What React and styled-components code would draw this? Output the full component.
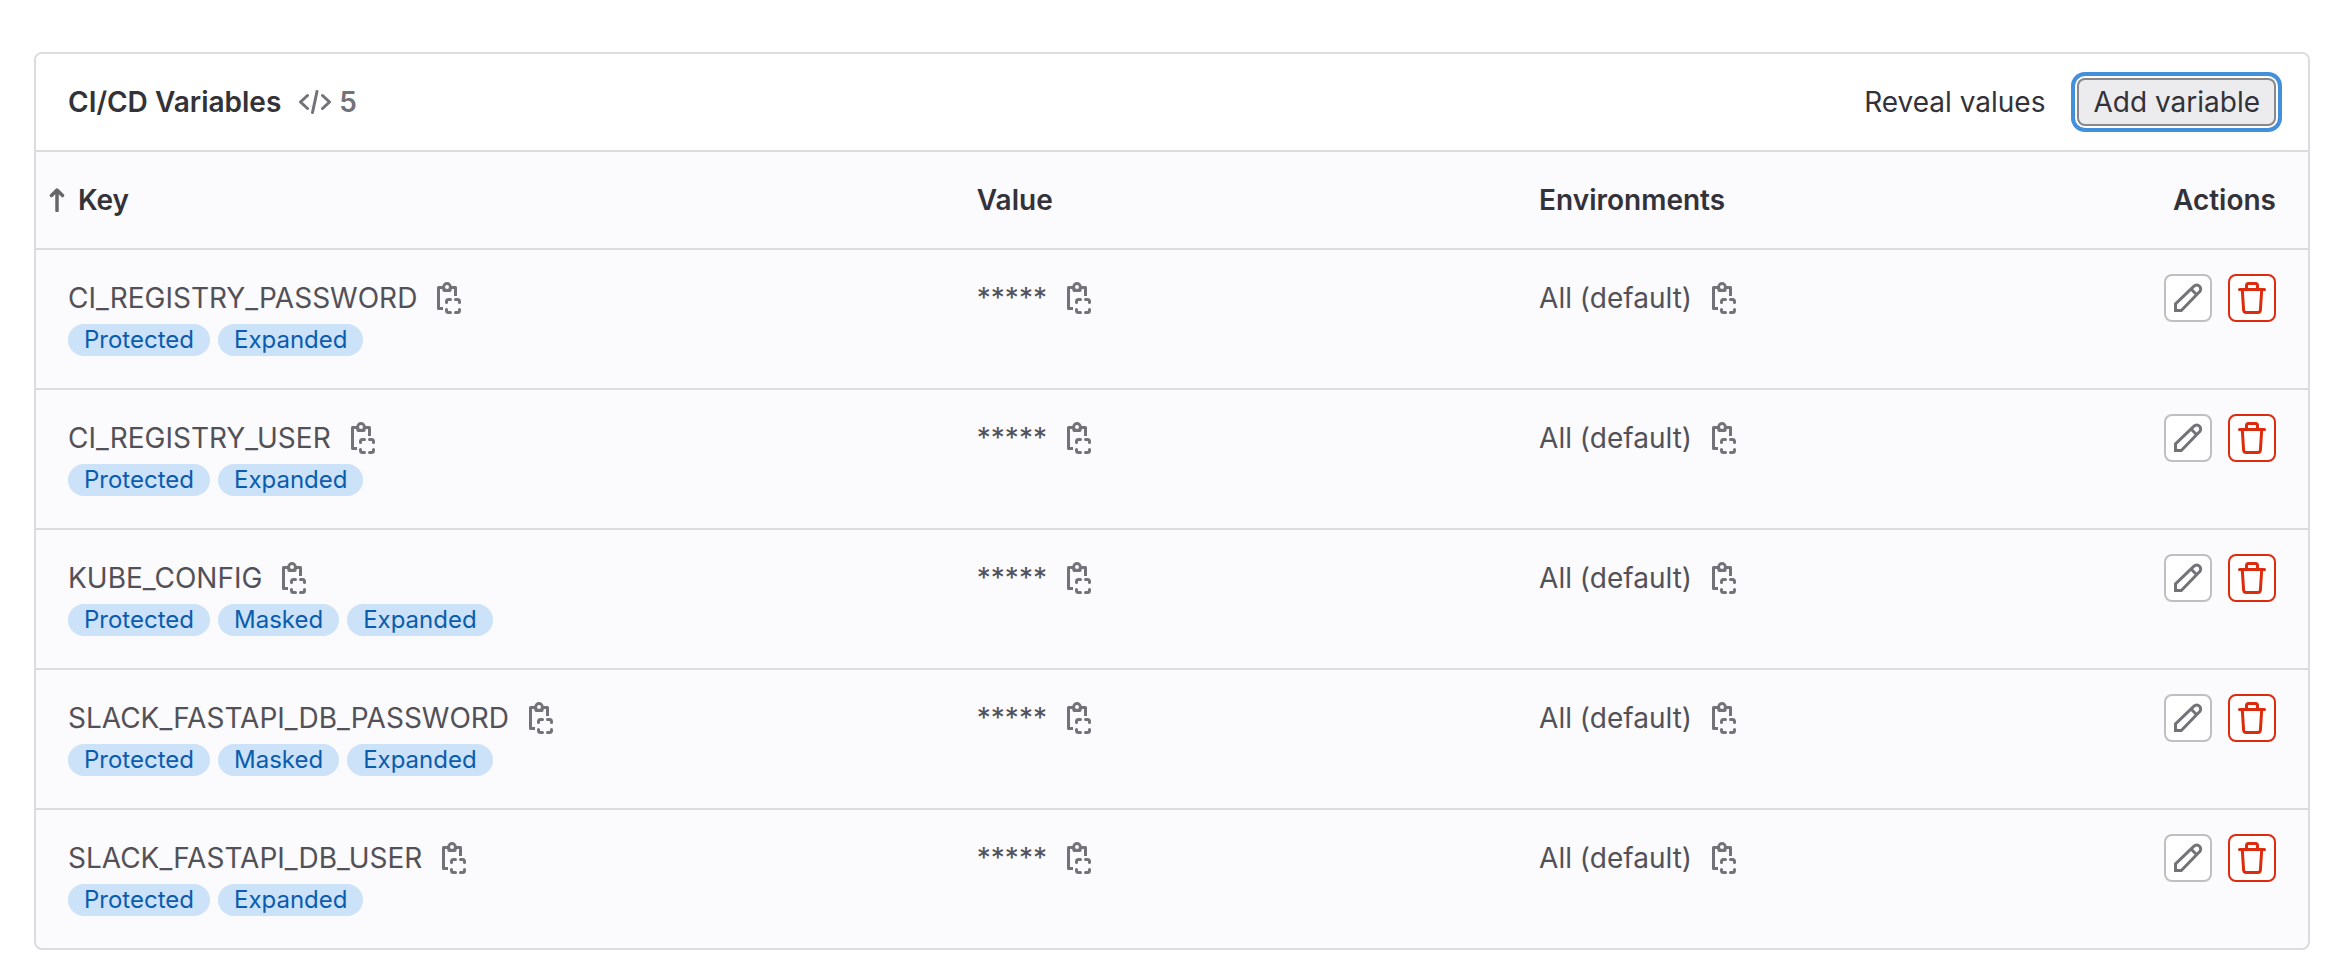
import React from "react";
import styled, { createGlobalStyle } from "styled-components";

const GlobalStyle = createGlobalStyle`
  *, *::before, *::after { box-sizing: border-box; }
  body {
    margin: 0;
    background: #fff;
    color: #333238;
    font-family: Inter, "Noto Sans", sans-serif;
    font-size: 28px;
    line-height: 48px;
  }
`;

const Page = styled.main`
  padding: 52px 16px 14px 34px;
`;

const Card = styled.section`
  border: 2px solid #dcdcde;
  border-radius: 8px;
  background: #fbfafd;
  overflow: hidden;
`;

const CardHeader = styled.header`
  display: flex;
  align-items: center;
  justify-content: space-between;
  padding: 24px 32px;
  background: #fff;
`;

const TitleGroup = styled.div`
  display: flex;
  align-items: center;
  gap: 18px;
`;

const Title = styled.h2`
  margin: 0;
  font-size: 28px;
  font-weight: 600;
`;

const Count = styled.span`
  display: flex;
  align-items: center;
  gap: 8px;
  color: #737278;
  font-weight: 600;
`;

const HeaderActions = styled.div`
  display: flex;
  gap: 16px;
`;

const Button = styled.button`
  height: 48px;
  padding: 0 16px;
  border: 0;
  border-radius: 8px;
  background: ${(p) => (p.$focused ? "#ececef" : "transparent")};
  box-shadow: ${(p) =>
    p.$focused ? "inset 0 0 0 2px #89888d, 0 0 0 2px #fff, 0 0 0 6px #428fdc" : "none"};
  color: #333238;
  font: inherit;
  cursor: pointer;
`;

const Table = styled.table`
  width: 100%;
  table-layout: fixed;
  border-collapse: separate;
  border-spacing: 0;
`;

const Column = styled.col`
  width: ${(p) => p.$width};
`;

const HeadCell = styled.th`
  padding: 24px 32px;
  border-top: 2px solid #dcdcde;
  font-weight: 600;
  text-align: ${(p) => p.$align || "left"};
`;

const SortCell = styled(HeadCell)`
  padding-left: 12px;
`;

const SortButton = styled.button`
  display: flex;
  align-items: center;
  gap: 12px;
  padding: 0;
  border: 0;
  background: none;
  color: inherit;
  font: inherit;
  cursor: pointer;
`;

const Cell = styled.td`
  padding: 24px 32px 32px;
  border-top: 2px solid #dcdcde;
  color: #535158;
  vertical-align: top;
`;

const CopyLine = styled.div`
  display: flex;
  align-items: center;
  gap: 20px;
`;

const CopyButton = styled.button`
  display: flex;
  padding: 0;
  border: 0;
  background: none;
  color: #737278;
  cursor: pointer;
`;

const Badges = styled.div`
  display: flex;
  gap: 8px;
  margin-top: 2px;
`;

const Badge = styled.span`
  padding: 0 16px;
  border-radius: 16px;
  background: #cbe2f9;
  color: #0b5cad;
  font-size: 24px;
  line-height: 32px;
`;

const RowActions = styled.div`
  display: flex;
  justify-content: flex-end;
  gap: 16px;
`;

const IconButton = styled.button`
  display: flex;
  align-items: center;
  justify-content: center;
  width: 48px;
  height: 48px;
  padding: 0;
  border: 2px solid ${(p) => (p.$danger ? "#dd2b0e" : "#bfbfc3")};
  border-radius: 8px;
  background: #fff;
  color: ${(p) => (p.$danger ? "#dd2b0e" : "#737278")};
  cursor: pointer;
`;

const Icon = styled.svg.attrs({ fill: "none", stroke: "currentColor", strokeWidth: 3, "aria-hidden": true })`
  display: block;
  flex: none;
`;

const SortArrow = styled(Icon)`
  color: #666;
`;

const CodeIcon = () => (
  <Icon width="32" height="24" viewBox="0 0 32 24" strokeLinecap="round" strokeLinejoin="round">
    <path d="M8.5 5.5 1.5 12l7 6.5M23.5 5.5l7 6.5-7 6.5M18 1.5l-4.5 21" />
  </Icon>
);

const ArrowIcon = () => (
  <SortArrow width="18" height="24" viewBox="0 0 18 24" strokeLinecap="round" strokeLinejoin="round">
    <path d="M9 22.5V2.5M3.5 7.5 9 2l5.5 5.5" strokeWidth="3.5" />
  </SortArrow>
);

const CopyIcon = () => (
  <Icon width="24" height="32" viewBox="0 0 24 32">
    <path d="M6 26.500H1.500v-21H6M14 5.500h4.500V14" strokeLinejoin="round" />
    <path
      d="M5.300 4.700a4.700 4.700 0 0 1 9.400 0V8a2 2 0 0 1-2 2H7.300a2 2 0 0 1-2-2zM10 3a2 2 0 1 0 0 4 2 2 0 0 0 0-4z"
      fill="currentColor"
      fillRule="evenodd"
      stroke="none"
    />
    <path
      d="M9.500 20.500v-1a2 2 0 0 1 2-2h2M18.500 17.500h2a2 2 0 0 1 2 2v1M22.500 27.500v1a2 2 0 0 1-2 2h-2M13.500 30.500h-2a2 2 0 0 1-2-2v-1"
      strokeLinecap="round"
    />
  </Icon>
);

const PencilIcon = () => (
  <Icon width="32" height="32" viewBox="0 0 32 32">
    <path d="M3.500 28.500v-6.500L22 4.200a3.900 3.900 0 0 1 5.500 0 3.900 3.900 0 0 1 0 5.600L9.300 28.500zM19 7l6 6" />
  </Icon>
);

const TrashIcon = () => (
  <Icon width="32" height="32" viewBox="0 0 32 32" strokeLinecap="round">
    <path d="M3.500 7.500h25M10.500 7V3.500a2 2 0 0 1 2-2h7a2 2 0 0 1 2 2V7M6.300 8l1.300 20a2.700 2.700 0 0 0 2.700 2.500h11.400a2.700 2.700 0 0 0 2.700-2.500l1.300-20" />
  </Icon>
);

const Copyable = ({ children, label }) => (
  <CopyLine>
    <span>{children}</span>
    <CopyButton type="button" aria-label={label}>
      <CopyIcon />
    </CopyButton>
  </CopyLine>
);

const variables = [
  { key: "CI_REGISTRY_PASSWORD", tags: ["Protected", "Expanded"] },
  { key: "CI_REGISTRY_USER", tags: ["Protected", "Expanded"] },
  { key: "KUBE_CONFIG", tags: ["Protected", "Masked", "Expanded"] },
  { key: "SLACK_FASTAPI_DB_PASSWORD", tags: ["Protected", "Masked", "Expanded"] },
  { key: "SLACK_FASTAPI_DB_USER", tags: ["Protected", "Expanded"] },
];

const VariableRow = ({ variable }) => (
  <tr>
    <Cell>
      <Copyable label="Copy key">{variable.key}</Copyable>
      <Badges>
        {variable.tags.map((tag) => (
          <Badge key={tag}>{tag}</Badge>
        ))}
      </Badges>
    </Cell>
    <Cell>
      <Copyable label="Copy value">*****</Copyable>
    </Cell>
    <Cell>
      <Copyable label="Copy environment">All (default)</Copyable>
    </Cell>
    <Cell>
      <RowActions>
        <IconButton type="button" aria-label="Edit">
          <PencilIcon />
        </IconButton>
        <IconButton type="button" aria-label="Delete" $danger>
          <TrashIcon />
        </IconButton>
      </RowActions>
    </Cell>
  </tr>
);

export default function App() {
  return (
    <Page>
      <GlobalStyle />
      <Card>
        <CardHeader>
          <TitleGroup>
            <Title>CI/CD Variables</Title>
            <Count>
              <CodeIcon />
              {variables.length}
            </Count>
          </TitleGroup>
          <HeaderActions>
            <Button type="button">Reveal values</Button>
            <Button type="button" $focused>
              Add variable
            </Button>
          </HeaderActions>
        </CardHeader>
        <Table>
          <colgroup>
            <Column $width="40%" />
            <Column $width="24.75%" />
            <Column />
            <Column $width="12%" />
          </colgroup>
          <thead>
            <tr>
              <SortCell scope="col" aria-sort="ascending">
                <SortButton type="button">
                  <ArrowIcon />
                  Key
                </SortButton>
              </SortCell>
              <HeadCell scope="col">Value</HeadCell>
              <HeadCell scope="col">Environments</HeadCell>
              <HeadCell scope="col" $align="right">
                Actions
              </HeadCell>
            </tr>
          </thead>
          <tbody>
            {variables.map((variable) => (
              <VariableRow key={variable.key} variable={variable} />
            ))}
          </tbody>
        </Table>
      </Card>
    </Page>
  );
}
